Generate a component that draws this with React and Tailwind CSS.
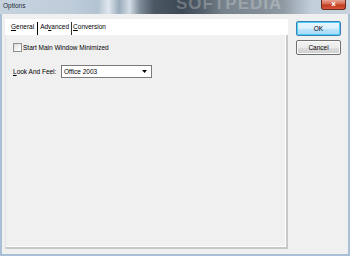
import React from "react";

export default function App() {
  const font = { fontFamily: '"Liberation Sans", Arial, sans-serif' };
  return (
    <div
      className="w-[350px] h-[256px] flex flex-col bg-[#a9bfd6] overflow-hidden text-black"
      style={font}
    >
      {/* Title bar */}
      <div className="relative h-[14px] shrink-0 flex items-start justify-between bg-[linear-gradient(90deg,#c6d3df_0%,#bfcddb_20%,#b3c3d2_28%,#dfe7ee_31%,#9aabbb_34%,#d3dde6_37%,#7d8b98_40%,#4b5762_44%,#3c4853_52%,#55616c_58%,#77828c_64%,#838e98_75%,#8f9aa4_81%,#aab6c1_85%,#c2ced9_89%,#c8d3de_100%)]">
        <span className="pl-[3px] pt-[1px] text-[6.5px] leading-[9px] text-[#1e2a36]">Options</span>
        <span className="absolute left-[176px] top-[-5px] text-[17px] font-bold tracking-[1px] text-white/25 leading-none">
          SOFTPEDIA
        </span>
        <div className="mr-[4px] w-[25px] h-[10px] rounded-b-[3px] border border-t-0 border-[#6b2a20] bg-[linear-gradient(180deg,#e8a493_0%,#d4664e_45%,#c13a1e_55%,#d5593a_100%)] flex items-center justify-center">
          <span className="text-white text-[7px] font-bold leading-none" style={{ fontFamily: '"DejaVu Sans", sans-serif' }}>x</span>
        </div>
      </div>

      {/* Client area */}
      <div className="flex-1 mx-[2px] mb-[2px] bg-[#f0f0f0] flex pt-[5px] pl-[3px]">
        {/* Tab panel */}
        <div className="w-[283px] h-[230px] flex flex-col">
          <div className="h-[16px] bg-white flex items-stretch text-[6.5px]">
            <div className="pl-[6px] pr-[3px] flex items-center">
              <span><u className="decoration-[0.5px]">G</u>eneral</span>
            </div>
            <div className="w-px bg-black mt-[3px]" />
            <div className="pl-[2px] pr-[2px] flex items-center">
              <span>Ad<u className="decoration-[0.5px]">v</u>anced</span>
            </div>
            <div className="w-px bg-[#333] mt-[3px]" />
            <div className="pl-[1px] flex items-center">
              <span><u className="decoration-[0.5px]">C</u>onversion</span>
            </div>
          </div>
          <div className="flex-1 border-l border-l-[#e2e2e2] border-r-2 border-r-[#c8c8c8] border-b-2 border-b-[#c8c8c8] shadow-[inset_-1px_-1px_0_#ffffff] flex flex-col pl-[7px] pt-[8px]">
            <div className="flex items-center gap-[1px] h-[9px]">
              <div className="w-[9px] h-[9px] border border-[#8e8f8f] bg-[linear-gradient(135deg,#dcdcdc_0%,#f4f4f4_60%,#ffffff_100%)]" />
              <span className="text-[6.5px] leading-[9px]">Start Main Window Minimized</span>
            </div>
            <div className="flex items-center mt-[13px] h-[13px]">
              <span className="text-[6.5px] w-[48px]"><u className="decoration-[0.5px]">L</u>ook And Feel:</span>
              <div className="w-[91px] h-[13px] border border-[#7a7a7a] bg-white flex items-center justify-between pl-[2px] pr-[4px]">
                <span className="text-[6.5px]">Office 2003</span>
                <svg width="5" height="3" viewBox="0 0 5 3">
                  <path d="M0 0 H5 L2.5 3 Z" fill="#000" />
                </svg>
              </div>
            </div>
          </div>
        </div>

        {/* Buttons */}
        <div className="ml-[8px] mt-[2px] flex flex-col gap-[4px]">
          <div className="w-[45px] h-[15px] rounded-[2px] border border-[#3c7fb1] shadow-[inset_0_0_0_1px_#48d0f8] bg-[linear-gradient(180deg,#eaf6fd_0%,#d9f0fc_50%,#bee6fd_51%,#a7d9f5_100%)] flex items-center justify-center">
            <span className="text-[6.5px]">OK</span>
          </div>
          <div className="w-[45px] h-[15px] rounded-[2px] border border-[#707070] shadow-[inset_0_0_0_1px_#fbfbfb] bg-[linear-gradient(180deg,#f2f2f2_0%,#ebebeb_50%,#dddddd_51%,#cfcfcf_100%)] flex items-center justify-center">
            <span className="text-[6.5px]">Cancel</span>
          </div>
        </div>
      </div>
    </div>
  );
}
